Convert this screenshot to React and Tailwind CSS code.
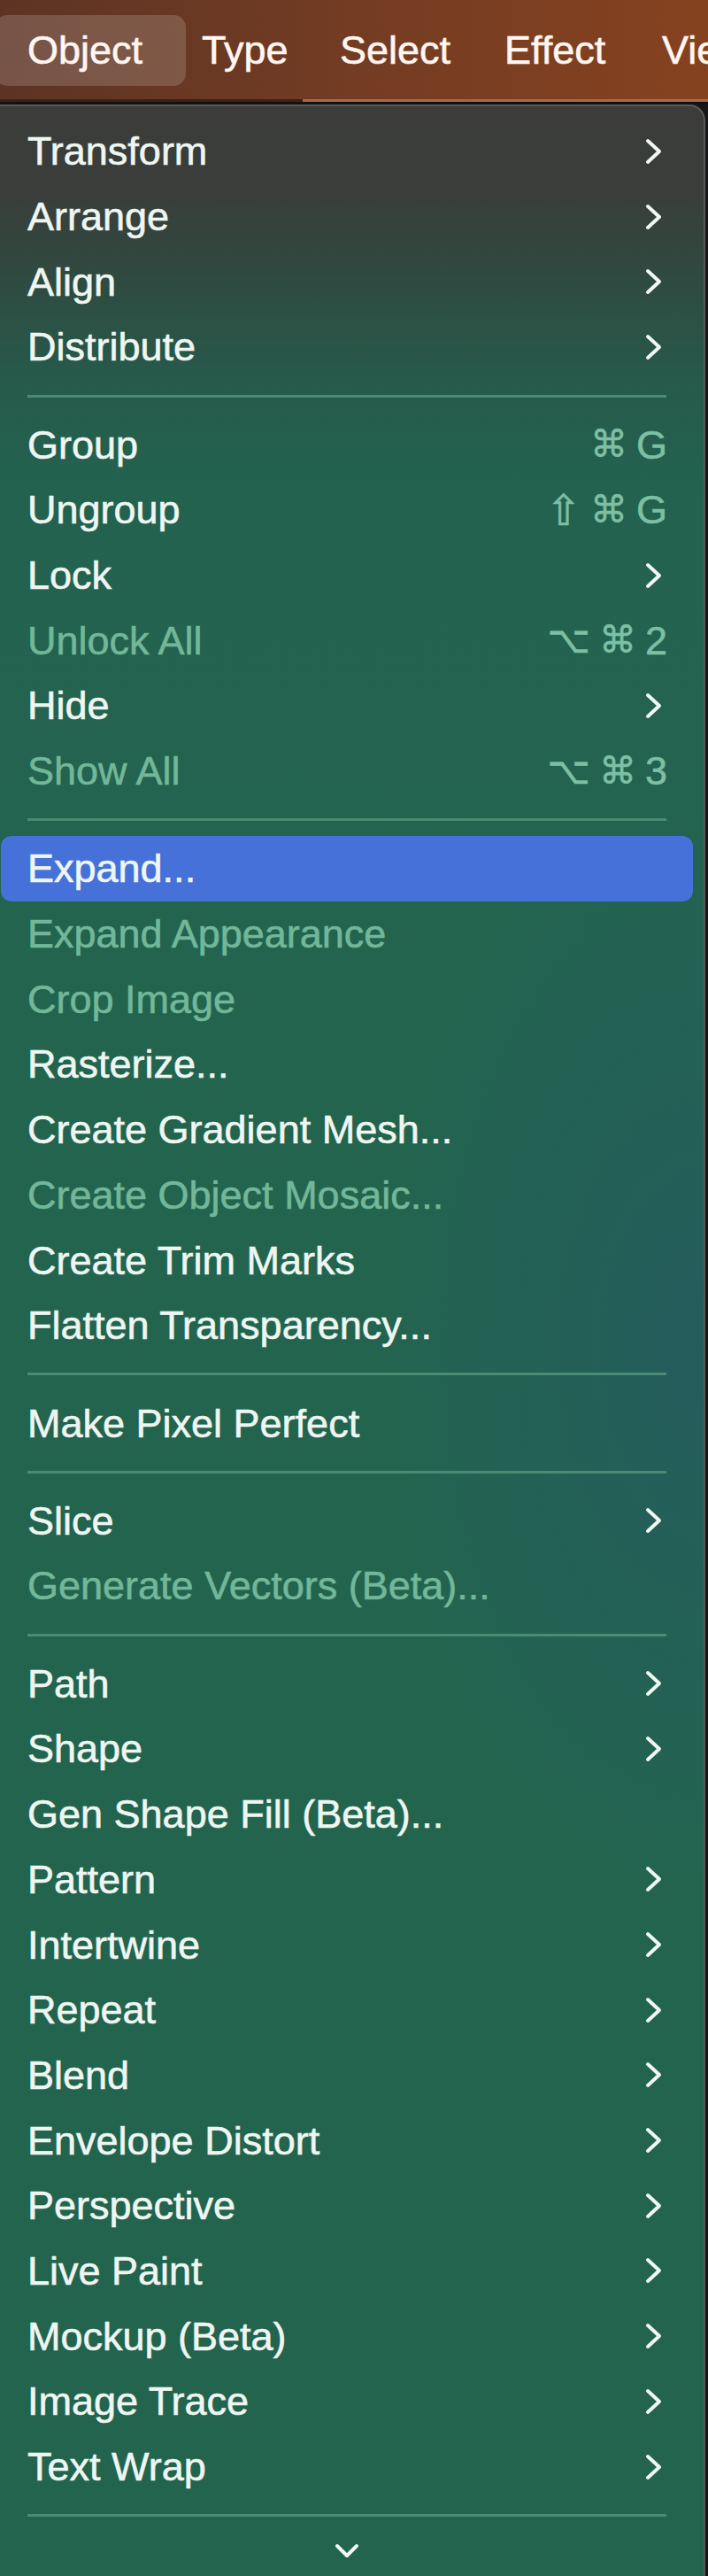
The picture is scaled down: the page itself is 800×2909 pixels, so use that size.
import React from "react";

const SUB = "sub";
const items = [
  { t: "Transform", r: SUB },
  { t: "Arrange", r: SUB },
  { t: "Align", r: SUB },
  { t: "Distribute", r: SUB },
  "sep",
  { t: "Group", k: ["⌘", "G"] },
  { t: "Ungroup", k: ["⇧", "⌘", "G"] },
  { t: "Lock", r: SUB },
  { t: "Unlock All", d: true, k: ["⌥", "⌘", "2"] },
  { t: "Hide", r: SUB },
  { t: "Show All", d: true, k: ["⌥", "⌘", "3"] },
  "sep",
  { t: "Expand...", hl: true },
  { t: "Expand Appearance", d: true },
  { t: "Crop Image", d: true },
  { t: "Rasterize..." },
  { t: "Create Gradient Mesh..." },
  { t: "Create Object Mosaic...", d: true },
  { t: "Create Trim Marks" },
  { t: "Flatten Transparency..." },
  "sep",
  { t: "Make Pixel Perfect" },
  "sep",
  { t: "Slice", r: SUB },
  { t: "Generate Vectors (Beta)...", d: true },
  "sep",
  { t: "Path", r: SUB },
  { t: "Shape", r: SUB },
  { t: "Gen Shape Fill (Beta)..." },
  { t: "Pattern", r: SUB },
  { t: "Intertwine", r: SUB },
  { t: "Repeat", r: SUB },
  { t: "Blend", r: SUB },
  { t: "Envelope Distort", r: SUB },
  { t: "Perspective", r: SUB },
  { t: "Live Paint", r: SUB },
  { t: "Mockup (Beta)", r: SUB },
  { t: "Image Trace", r: SUB },
  { t: "Text Wrap", r: SUB },
  "sep",
];

function Chevron() {
  return (
    <svg width="22" height="32" viewBox="0 0 22 32" className="mr-[4px]">
      <polyline
        points="4,4 17,16 4,28"
        fill="none"
        stroke="#f1f7f3"
        strokeWidth="4"
        strokeLinecap="round"
        strokeLinejoin="round"
      />
    </svg>
  );
}

function Keys({ k }) {
  return (
    <div className="flex items-center gap-[10px] text-[#7dbfa4] [-webkit-text-stroke:0.6px_currentColor]">
      {k.map((c, i) =>
        c === "⌘" || c === "⇧" || c === "⌥" ? (
          <span
            key={i}
            className={
              "leading-none font-['DejaVu_Sans',sans-serif] " +
              (c === "⇧"
                ? "text-[48px] [-webkit-text-stroke:0.7px_currentColor]"
                : "text-[42px] [-webkit-text-stroke:0.6px_currentColor]")
            }
          >
            {c}
          </span>
        ) : (
          <span key={i} className="text-[45px] leading-none">
            {c}
          </span>
        )
      )}
    </div>
  );
}

function Row({ it }) {
  return (
    <div className="relative flex h-[73.7px] items-center justify-between pl-[31px] pr-[41px]">
      {it.hl && (
        <div className="absolute inset-y-0 left-[1px] right-[12px] rounded-[12px] bg-[#4571d9]" />
      )}
      <span
        className={
          "relative whitespace-nowrap text-[45px] leading-none [-webkit-text-stroke:0.6px_currentColor] " +
          (it.d ? "text-[#72b799]" : "text-[#eef6f1]")
        }
      >
        {it.t}
      </span>
      <div className="relative flex items-center">
        {it.r === SUB && <Chevron />}
        {it.k && <Keys k={it.k} />}
      </div>
    </div>
  );
}

function Sep() {
  return (
    <div className="flex h-[36.6px] items-center pl-[31px] pr-[42px]">
      <div className="h-[3px] w-full bg-[#4a8b73]" />
    </div>
  );
}

export default function App() {
  return (
    <div className="h-[2909px] w-[800px] overflow-hidden bg-[#161716] font-['Liberation_Sans',Arial,sans-serif]">
      {/* menu bar */}
      <div className="relative h-[115px] overflow-hidden bg-[linear-gradient(90deg,#5d3424_0%,#713b23_45%,#7d3f21_75%,#85421f_100%)]">
        <div className="absolute left-[-6px] top-[17px] h-[80px] w-[216px] rounded-[14px] bg-[#ffffff29]" />
        <div className="relative flex h-[112px] items-center whitespace-nowrap pl-[31px] text-[45px] leading-none text-[#fff6f1] [-webkit-text-stroke:0.6px_currentColor]">
          <span className="w-[197px] shrink-0">Object</span>
          <span className="w-[156px] shrink-0">Type</span>
          <span className="w-[186px] shrink-0">Select</span>
          <span className="w-[178px] shrink-0">Effect</span>
          <span className="shrink-0">Vie</span>
        </div>
        <div className="flex h-[3px]">
          <div className="w-[342px] bg-[#3a2218]" />
          <div className="flex-1 bg-[#a8694a]" />
        </div>
      </div>
      <div className="h-[3px] bg-[#121212]" />
      {/* menu */}
      <div className="w-[797px] rounded-tr-[18px] border-t-2 border-r-2 border-[#585a57] bg-[linear-gradient(180deg,#3c3d3b_0px,#3a3d3a_90px,#2f4b41_200px,#27594a_300px,#23624f_420px,#23644f_1000px,#23644f_100%)]">
        <div className="bg-[radial-gradient(ellipse_45%_22%_at_100%_50%,rgba(38,86,104,0.55),rgba(38,86,104,0))] pt-[14px]">
          {items.map((it, i) =>
            it === "sep" ? <Sep key={i} /> : <Row key={i} it={it} />
          )}
          <div className="flex h-[60px] w-[784px] justify-center pt-[12px]">
            <svg width="30" height="20" viewBox="0 0 30 20">
              <polyline
                points="4,4 15,15 26,4"
                fill="none"
                stroke="#f1f7f3"
                strokeWidth="4"
                strokeLinecap="round"
                strokeLinejoin="round"
              />
            </svg>
          </div>
        </div>
      </div>
    </div>
  );
}
